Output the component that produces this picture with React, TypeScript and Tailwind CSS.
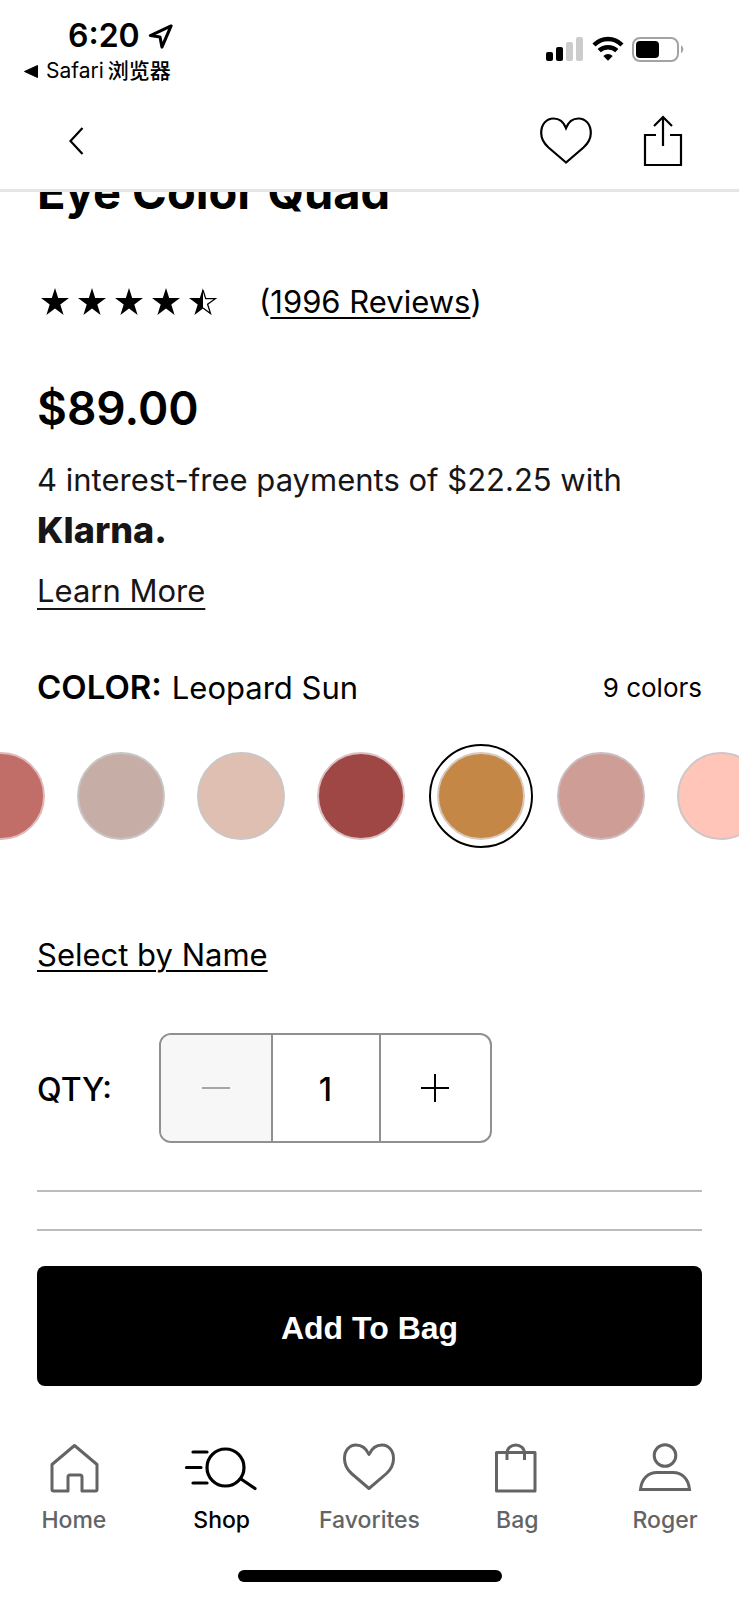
import { useState } from "react";

const swatches = [
  { name: "Rose Clay", fill: "bg-[#c16e68]", ring: "border-[#e0b8b8]" },
  { name: "Mauve Mist", fill: "bg-[#c6aea7]", ring: "border-[#c9c5c4]" },
  { name: "Soft Sand", fill: "bg-[#dfbfb1]", ring: "border-[#cbc6c4]" },
  { name: "Brick Red", fill: "bg-[#9e4745]", ring: "border-[#dcc0c2]" },
  { name: "Leopard Sun", fill: "bg-[#c58746]", ring: "border-[#d6c9be]" },
  { name: "Dusty Rose", fill: "bg-[#cd9d96]", ring: "border-[#cdbcbe]" },
  { name: "Peach Glow", fill: "bg-[#ffc5b8]", ring: "border-[#d0c5c8]" },
];

const STAR =
  "M14 0 L17.2 10 L28 10.1 L19.3 16.4 L22.6 27 L14 20.6 L5.4 27 L8.7 16.4 L0 10.1 L10.8 10 Z";

function StatusBar() {
  return (
    <div className="flex items-start justify-between pl-6 pr-[55px]">
      <div className="pt-4">
        <div className="flex items-center gap-2 pl-11">
          <span className="text-[32px] leading-10 font-semibold">6:20</span>
          <svg width="25" height="25" viewBox="0 0 26 26" fill="none" stroke="currentColor" strokeWidth="3.200" strokeLinejoin="round" aria-hidden="true">
            <path d="M24 2 L2.500 12 L12.500 13.500 L14.500 24 Z" />
          </svg>
        </div>
        <a href="#safari" className="flex items-center gap-2 text-[21px] leading-[30px]">
          <svg width="14" height="13" viewBox="0 0 14 13" fill="currentColor" aria-hidden="true">
            <path d="M13.500 0.500 V12.500 L0.500 6.500 Z" stroke="currentColor" strokeLinejoin="round" />
          </svg>
          <span className="flex gap-1">
            <span>Safari</span>
            <span className="font-medium">浏览器</span>
          </span>
        </a>
      </div>
      <div className="flex items-end gap-2 pt-9">
        <svg width="38" height="26" viewBox="0 0 38 26" aria-hidden="true">
          <rect x="0" y="16" width="7" height="9" rx="2" />
          <rect x="10" y="11" width="7" height="14" rx="2" />
          <rect x="20" y="6" width="7" height="19" rx="2" fill="#cccccc" />
          <rect x="30" y="1" width="7" height="24" rx="2" fill="#cccccc" />
        </svg>
        <svg width="32" height="26" viewBox="0 0 32 26" fill="none" stroke="black" strokeWidth="4.500" aria-hidden="true">
          <path d="M2 9 C10 1 22 1 30 9" />
          <path d="M7.200 14.700 C12 10 20 10 24.800 14.700" />
          <path d="M11.300 20 C14 17.300 18 17.300 20.700 20 L16 24.800 Z" fill="black" stroke="none" />
        </svg>
        <svg width="52" height="26" viewBox="0 0 52 26" aria-hidden="true">
          <rect x="1" y="2" width="45" height="23" rx="7" fill="none" stroke="#a3a3a3" strokeWidth="2" />
          <rect x="4" y="5" width="23" height="17" rx="4" />
          <path d="M49 9.500 C52 10.500 52 16 49 17 Z" fill="#a3a3a3" />
        </svg>
      </div>
    </div>
  );
}

function Toolbar() {
  return (
    <div className="flex items-center justify-between pl-[68px] pr-[56px]">
      <button type="button" aria-label="Back" className="py-3">
        <svg width="16" height="28" viewBox="0 0 16 28" fill="none" stroke="currentColor" strokeWidth="2.200">
          <path d="M14.500 1 L2.500 14 L14.500 27" />
        </svg>
      </button>
      <div className="flex items-center gap-[50px]">
        <button type="button" aria-label="Add to favorites">
          <svg width="54" height="50" viewBox="0 0 54 50" fill="none" stroke="currentColor" strokeWidth="2.200">
            <path d="M27 46.500 L9.500 31.500 C4.500 27 2.200 22.500 2.200 17 C2.200 8 7.500 2.500 14.500 2.500 C20 2.500 24.500 5.500 27 12 C29.500 5.500 34 2.500 39.500 2.500 C46.500 2.500 51.800 8 51.800 17 C51.800 22.500 49.500 27 44.500 31.500 Z" />
          </svg>
        </button>
        <button type="button" aria-label="Share">
          <svg width="40" height="52" viewBox="0 0 40 52" fill="none" stroke="currentColor" strokeWidth="2.200">
            <path d="M13 20 H2 V50 H38 V20 H27" />
            <path d="M20 31 V2 M11 11 L20 2 L29 11" />
          </svg>
        </button>
      </div>
    </div>
  );
}

function Rating() {
  return (
    <div className="flex items-center gap-[42px] pl-1">
      <div className="flex gap-[9px]" role="img" aria-label="4.5 out of 5 stars">
        {[0, 1, 2, 3].map((i) => (
          <svg key={i} width="28" height="28" viewBox="0 0 28 28">
            <path d={STAR} />
          </svg>
        ))}
        <svg width="28" height="28" viewBox="0 0 28 28">
          <path d="M14 0 L10.800 10 L0 10.100 L8.700 16.400 L5.400 27 L14 20.600 Z" />
          <path d="M14 2 L16.700 10.600 L26.300 10.700 L18.600 16.200 L21.500 25.500 L14 20" fill="none" stroke="black" strokeWidth="1.300" />
        </svg>
      </div>
      <a href="#reviews" className="text-[31px] leading-10">
        (<span className="underline decoration-2 underline-offset-4">1996 Reviews</span>)
      </a>
    </div>
  );
}

function Quantity() {
  const [qty, setQty] = useState(1);
  return (
    <div className="flex items-center">
      <label htmlFor="qty" className="w-[122px] pt-1 text-[32px] leading-10 font-medium">
        QTY:
      </label>
      <div className="flex h-[110px] w-[333px] overflow-hidden rounded-xl border-2 border-[#8f9092]">
        <button
          type="button"
          aria-label="Decrease quantity"
          disabled={qty <= 1}
          onClick={() => setQty(qty - 1)}
          className="flex flex-1 items-center justify-center bg-[#f7f7f8] text-[#a5a6a8]"
        >
          <svg width="28" height="28" viewBox="0 0 28 28" stroke="currentColor" strokeWidth="2">
            <path d="M0 14 H28" />
          </svg>
        </button>
        <input
          id="qty"
          readOnly
          value={qty}
          className="w-[110px] border-x-2 border-[#8f9092] pt-1 text-center text-[32px] font-medium outline-none"
        />
        <button
          type="button"
          aria-label="Increase quantity"
          onClick={() => setQty(qty + 1)}
          className="flex flex-1 items-center justify-center"
        >
          <svg width="28" height="28" viewBox="0 0 28 28" stroke="currentColor" strokeWidth="2">
            <path d="M0 14 H28 M14 0 V28" />
          </svg>
        </button>
      </div>
    </div>
  );
}

const tabs = [
  {
    label: "Home",
    icon: (
      <svg width="50" height="52" viewBox="0 0 50 52" fill="none" stroke="currentColor" strokeWidth="3" strokeLinejoin="round">
        <path d="M25.500 3.500 L48 22.500 V47.500 Q48 49 46.500 49 H33 V35 Q33 33 31 33 H21 Q19 33 19 35 V49 H4.500 Q3 49 3 47.500 V22.500 Z" />
      </svg>
    ),
  },
  {
    label: "Shop",
    icon: (
      <svg width="76" height="52" viewBox="0 0 76 52" fill="none" stroke="currentColor" strokeWidth="3.200" strokeLinecap="round">
        <circle cx="41.500" cy="25.500" r="18.500" />
        <path d="M57 37 L71 46.500" />
        <path d="M9 10 H23 M2.500 25.500 H17 M9 41 H23" />
      </svg>
    ),
  },
  {
    label: "Favorites",
    icon: (
      <svg width="54" height="52" viewBox="0 0 54 52" fill="none" stroke="currentColor" strokeWidth="3" strokeLinejoin="round">
        <path d="M27 46.500 L9.500 31.500 C5 27.500 2.500 23 2.500 16.500 C2.500 8.500 7.500 3 14 3 C20 3 24.500 7 27 12.500 C29.500 7 34 3 40 3 C46.500 3 51.500 8.500 51.500 16.500 C51.500 23 49 27.500 44.500 31.500 Z" />
      </svg>
    ),
  },
  {
    label: "Bag",
    icon: (
      <svg width="46" height="52" viewBox="0 0 46 52" fill="none" stroke="currentColor" strokeWidth="3" strokeLinejoin="round">
        <rect x="2.500" y="10.500" width="38.500" height="38.500" />
        <path d="M13 18 V11.500 C13 0 30.500 0 30.500 11.500 V18" />
      </svg>
    ),
  },
  {
    label: "Roger",
    icon: (
      <svg width="54" height="52" viewBox="0 0 54 52" fill="none" stroke="currentColor" strokeWidth="3">
        <circle cx="27" cy="13.500" r="10.800" />
        <path d="M2.500 47.500 C3.500 37 10 30.500 19 30.500 H35 C44 30.500 50.500 37 51.500 47.500 Z" />
      </svg>
    ),
  },
];

function TabBar() {
  return (
    <nav className="grid grid-cols-5 pt-14">
      {tabs.map((tab) => (
        <a
          key={tab.label}
          href={"#" + tab.label.toLowerCase()}
          aria-current={tab.label === "Shop" ? "page" : undefined}
          className="flex flex-col items-center gap-2.5 text-[23px] leading-8 font-medium text-[#636466] aria-[current=page]:text-black"
        >
          {tab.icon}
          {tab.label}
        </a>
      ))}
    </nav>
  );
}

export default function App() {
  const [selected, setSelected] = useState("Leopard Sun");
  return (
    <div className="min-h-screen overflow-x-hidden bg-white font-['Inter','Noto_Sans_CJK_SC',sans-serif] text-black">
      <header className="flex flex-col gap-[29px] border-b-3 border-[#e5e5e5] pb-[22px]">
        <StatusBar />
        <Toolbar />
      </header>

      <main>
        <div className="flex flex-col items-start px-[37px]">
          <div className="flex h-7 items-end overflow-hidden">
            <h1 className="text-[47px] leading-14 font-bold">Eye Color Quad</h1>
          </div>
          <div className="pt-[62px]">
            <Rating />
          </div>
          <p className="pt-[58px] text-[46px] leading-14 font-semibold">$89.00</p>
          <p className="pt-[19px] text-[31px] leading-[50px] text-[#161616]">
            4 interest-free payments of $22.25 with
            <br />
            <span className="text-[36px] font-extrabold">Klarna.</span>
          </p>
          <a
            href="#klarna"
            className="mt-[14px] text-[31px] leading-10 text-[#161616] underline decoration-2 underline-offset-6"
          >
            Learn More
          </a>
          <div className="flex w-full items-center justify-between pt-14">
            <p className="flex items-baseline gap-2.5 text-[31px] leading-10">
              <span className="text-[33px] font-semibold">COLOR:</span>
              <span>{selected}</span>
            </p>
            <p className="text-[26px] leading-10">9 colors</p>
          </div>
        </div>

        <div className="overflow-hidden pt-[36px] pb-[87px]">
          <div className="-ml-[43px] flex gap-8 py-2" role="radiogroup" aria-label="Color">
            {swatches.map((s) => (
              <button
                key={s.name}
                type="button"
                role="radio"
                aria-label={s.name}
                aria-checked={s.name === selected}
                onClick={() => setSelected(s.name)}
                className={`size-22 shrink-0 rounded-full border-2 outline-black aria-checked:outline-2 aria-checked:outline-offset-6 ${s.fill} ${s.ring}`}
              />
            ))}
          </div>
        </div>

        <div className="px-[37px]">
          <a href="#names" className="inline-block text-[31px] leading-10 underline decoration-2 underline-offset-4">
            Select by Name
          </a>
          <div className="pt-[58px]">
            <Quantity />
          </div>
          <hr className="mt-[47px] border-t-2 border-[#bcbcbc]" />
          <hr className="mt-[37px] border-t-2 border-[#bcbcbc]" />
          <button
            type="button"
            className="mt-[35px] h-30 w-full rounded-lg bg-black pt-1 font-['Liberation_Sans',sans-serif] text-[32px] leading-10 font-bold text-white"
          >
            Add To Bag
          </button>
        </div>
      </main>

      <TabBar />
      <div className="flex justify-center pt-[34px] pb-[18px]">
        <div className="h-3 w-[264px] rounded-full bg-black" />
      </div>
    </div>
  );
}
